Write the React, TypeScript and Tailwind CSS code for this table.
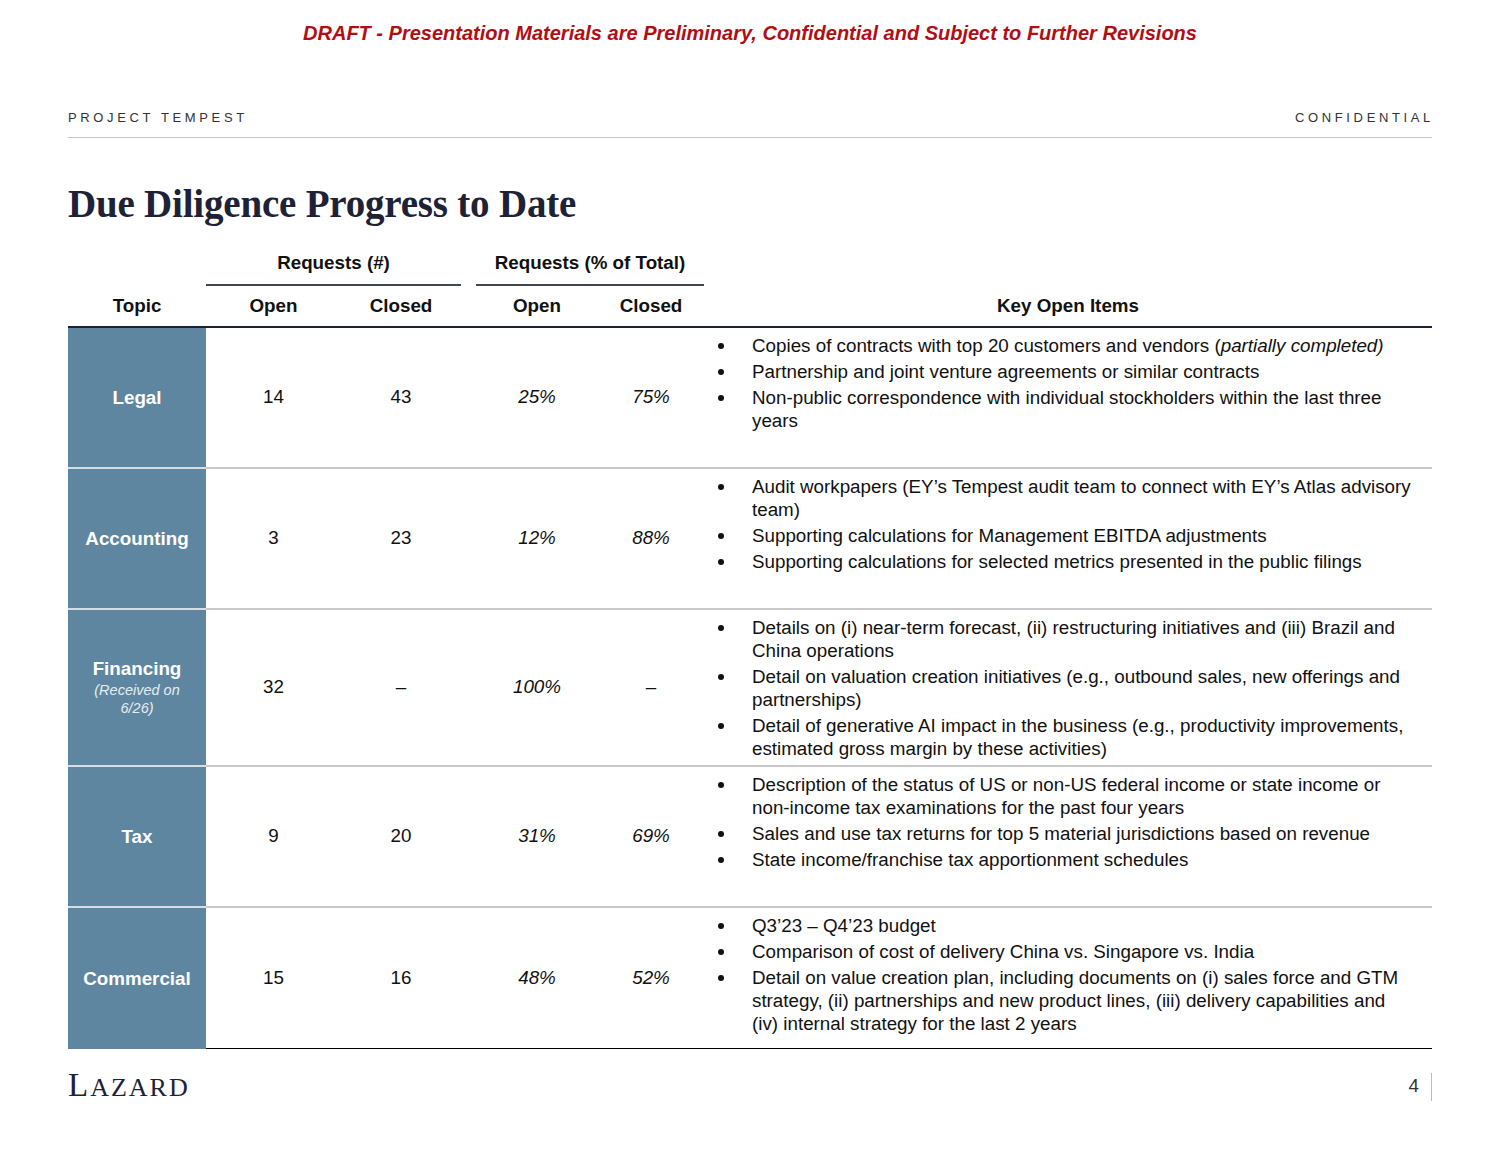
const rows = [
  {
    topic: 'Legal',
    note: '',
    open: '14',
    closed: '43',
    pctOpen: '25%',
    pctClosed: '75%',
    items: [
      <>Copies of contracts with top 20 customers and vendors (<i>partially completed)</i></>,
      <>Partnership and joint venture agreements or similar contracts</>,
      <>Non-public correspondence with individual stockholders within the last three years</>,
    ],
  },
  {
    topic: 'Accounting',
    note: '',
    open: '3',
    closed: '23',
    pctOpen: '12%',
    pctClosed: '88%',
    items: [
      <>Audit workpapers (EY’s Tempest audit team to connect with EY’s Atlas advisory team)</>,
      <>Supporting calculations for Management EBITDA adjustments</>,
      <>Supporting calculations for selected metrics presented in the public filings</>,
    ],
  },
  {
    topic: 'Financing',
    note: '(Received on 6/26)',
    open: '32',
    closed: '–',
    pctOpen: '100%',
    pctClosed: '–',
    items: [
      <>Details on (i) near-term forecast, (ii) restructuring initiatives and (iii) Brazil and China operations</>,
      <>Detail on valuation creation initiatives (e.g., outbound sales, new offerings and partnerships)</>,
      <>Detail of generative AI impact in the business (e.g., productivity improvements, estimated gross margin by these activities)</>,
    ],
  },
  {
    topic: 'Tax',
    note: '',
    open: '9',
    closed: '20',
    pctOpen: '31%',
    pctClosed: '69%',
    items: [
      <>Description of the status of US or non-US federal income or state income or <span className="whitespace-nowrap">non-income</span> tax examinations for the past four years</>,
      <>Sales and use tax returns for top 5 material jurisdictions based on revenue</>,
      <>State income/franchise tax apportionment schedules</>,
    ],
  },
  {
    topic: 'Commercial',
    note: '',
    open: '15',
    closed: '16',
    pctOpen: '48%',
    pctClosed: '52%',
    items: [
      <>Q3’23 – Q4’23 budget</>,
      <>Comparison of cost of delivery China vs. Singapore vs. India</>,
      <>Detail on value creation plan, including documents on (i) sales force and GTM strategy, (ii) partnerships and new product lines, (iii) delivery capabilities and <span className="whitespace-nowrap">(iv) internal</span> strategy for the last 2 years</>,
    ],
  },
];

const sans = "font-['Liberation_Sans',Arial,sans-serif]";
const serif = "font-['Liberation_Serif','Times_New_Roman',serif]";

export default function App() {
  return (
    <div className={`w-[1500px] h-[1159px] bg-white ${sans} text-[#111]`}>
      {/* Draft banner */}
      <div className="pt-[21px] text-center text-[20px] leading-[24px] font-bold italic text-[#b20d12]">
        DRAFT - Presentation Materials are Preliminary, Confidential and Subject to Further Revisions
      </div>

      <div className="mx-[68px]">
        {/* Top bar */}
        <div className="mt-[65px] flex justify-between pb-[11px] border-b border-[#c4c4c4] text-[13px] leading-[16px] tracking-[0.28em] text-[#333]">
          <span>PROJECT TEMPEST</span>
          <span className="mr-[-2px]">CONFIDENTIAL</span>
        </div>

        {/* Title */}
        <h1 className={`${serif} mt-[44px] text-[39px] leading-[44px] font-bold text-[#1e2236] tracking-[-0.2px]`}>
          Due Diligence Progress to Date
        </h1>

        {/* Header */}
        <div className="mt-[26px] text-[18.8px] font-bold leading-[22px]">
          <div className="grid grid-cols-[138px_255px_15px_228px_1fr]">
            <div />
            <div className="text-center pb-[10px] border-b-2 border-[#404552]">Requests (#)</div>
            <div />
            <div className="text-center pb-[10px] border-b-2 border-[#404552]">Requests (% of Total)</div>
            <div />
          </div>
          <div className="grid grid-cols-[138px_135px_120px_15px_122px_106px_1fr] pt-[9px] pb-[9px] border-b-2 border-[#1e2236]">
            <div className="text-center">Topic</div>
            <div className="text-center">Open</div>
            <div className="text-center">Closed</div>
            <div />
            <div className="text-center">Open</div>
            <div className="text-center">Closed</div>
            <div className="text-center">Key Open Items</div>
          </div>
        </div>

        {/* Body */}
        {rows.map((r, i) => {
          const last = i === rows.length - 1;
          return (
            <div key={r.topic} className="flex">
              <div
                className={`w-[138px] shrink-0 bg-[#5f86a0] flex flex-col items-center justify-center text-center text-white ${
                  last ? '' : 'border-b-2 border-[#d3dee6]'
                }`}
              >
                <div className="text-[18.8px] leading-[22px] font-bold">{r.topic}</div>
                {r.note && (
                  <div className="mt-[1px] w-[100px] text-[14.5px] leading-[18px] italic text-[#e6edf2]">{r.note}</div>
                )}
              </div>
              <div
                className={`flex-1 grid grid-cols-[135px_120px_15px_122px_106px_1fr] min-h-[141px] text-[18.8px] ${
                  last ? 'border-b-[1.5px] border-black' : 'border-b-2 border-[#c9c9c9]'
                }`}
              >
                <div className="flex items-center justify-center">{r.open}</div>
                <div className="flex items-center justify-center">{r.closed}</div>
                <div />
                <div className="flex items-center justify-center italic">{r.pctOpen}</div>
                <div className="flex items-center justify-center italic">{r.pctClosed}</div>
                <ul className="pt-[6px] pb-[5px] flex flex-col gap-[3px]">
                  {r.items.map((it, k) => (
                    <li key={k} className="flex text-[18.8px] leading-[23px]">
                      <span className="w-[48px] shrink-0 flex justify-start pl-[14px] pt-[9px]">
                        <span className="block w-[6px] h-[6px] rounded-full bg-[#111]" />
                      </span>
                      <span className="w-[668px]">{it}</span>
                    </li>
                  ))}
                </ul>
              </div>
            </div>
          );
        })}

        {/* Footer */}
        <div className="mt-[20px] flex items-center justify-between">
          <div className={`${serif} text-[#1e2236] leading-[32px] tracking-[2px] flex items-baseline`}>
            <span className="text-[33px]">L</span>
            <span className="text-[26px]">AZARD</span>
          </div>
          <div className="flex items-center h-[28px] border-r border-[#bdbdbd] pr-[12px] text-[18.8px] text-[#333]">4</div>
        </div>
      </div>
    </div>
  );
}
